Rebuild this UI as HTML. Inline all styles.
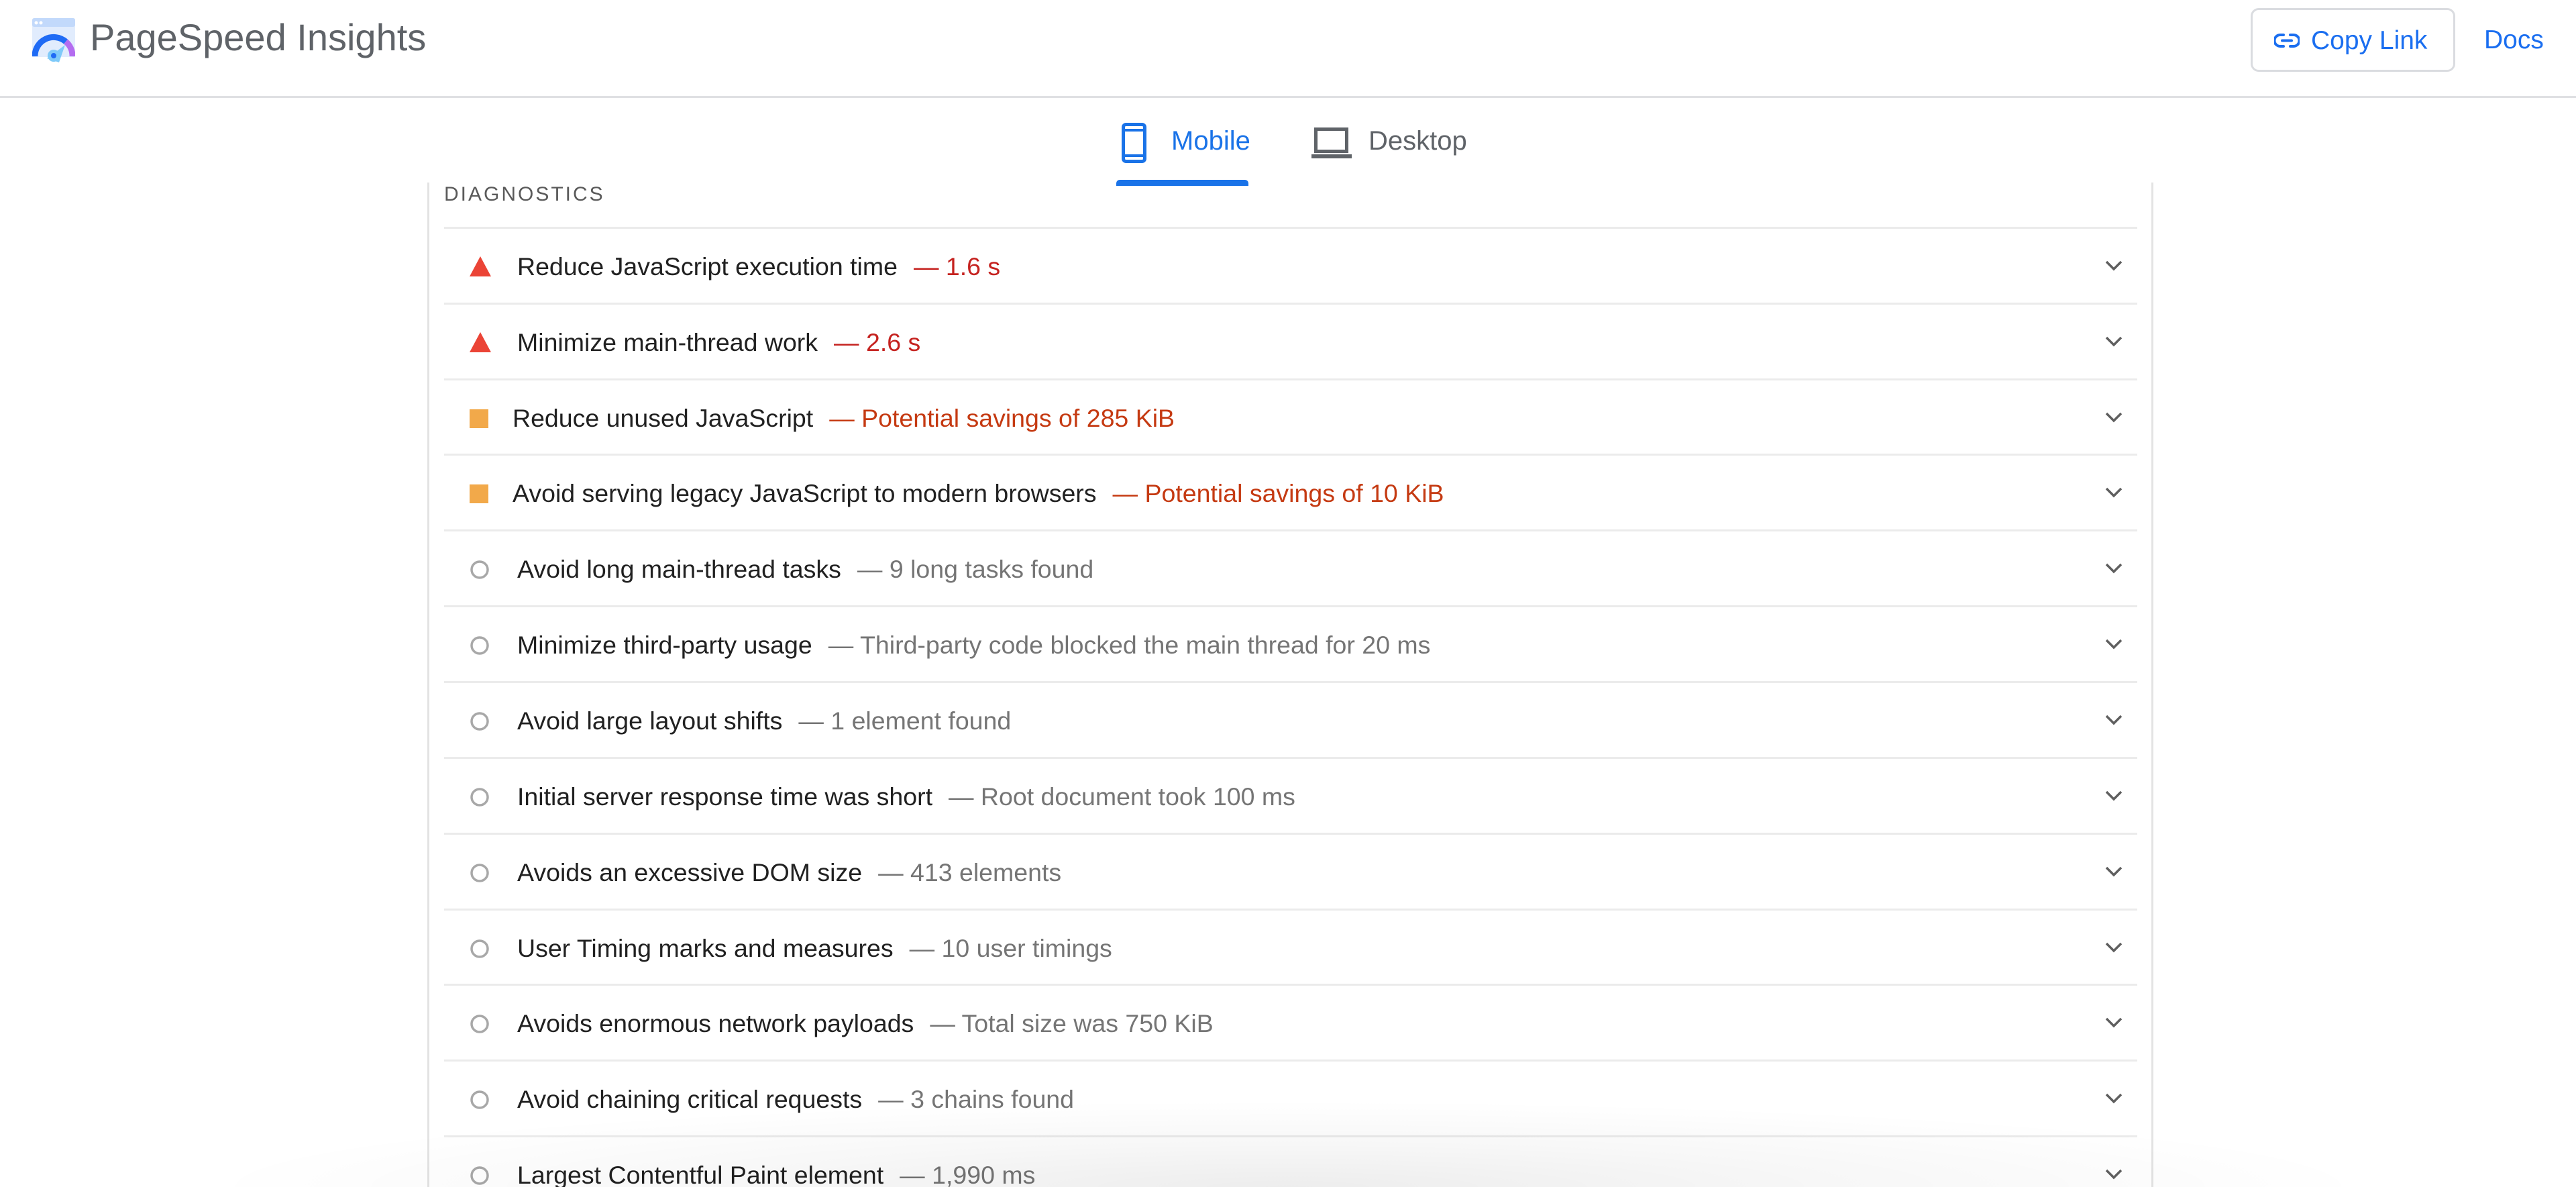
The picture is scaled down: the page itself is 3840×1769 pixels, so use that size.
<!DOCTYPE html>
<html><head><meta charset="utf-8">
<style>
*{margin:0;padding:0;box-sizing:border-box}
html,body{width:3840px;height:1769px;overflow:hidden;background:#fff;font-family:"Liberation Sans",Arial,sans-serif;position:relative}
.hdr{position:absolute;left:0;top:0;width:3840px;height:146px;border-bottom:3px solid #dfe0e3}
.title{position:absolute;left:134px;top:22px;font-size:56px;color:#5f6368;line-height:68px}
.btn{position:absolute;left:3355px;top:12px;width:305px;height:95px;border:3px solid #dadce0;border-radius:12px}
.btn span{position:absolute;left:87px;top:24px;font-size:39px;color:#1a6ef0;line-height:44px}
.docs{position:absolute;left:3703px;top:38px;font-size:39px;color:#1a6ef0;line-height:44px}
.tab{position:absolute;font-size:40px;line-height:48px;top:186px}
.uline{position:absolute;left:1664px;top:268px;width:197px;height:9px;background:#1a73e8;border-radius:5px 5px 0 0}
.panel{position:absolute;left:637px;top:272px;width:2573px;height:1497px;border-left:3px solid #e3e3e3;border-right:3px solid #e3e3e3}
.diag{position:absolute;left:662px;top:272px;font-size:30px;letter-spacing:3px;color:#5a5a5a;line-height:36px}
.row{position:absolute;left:662px;width:2524px;height:113px;border-top:3px solid #ebebeb;overflow:hidden}
.row .t{position:absolute;left:109px;top:34px;font-size:37.5px;line-height:44px;color:#212121;white-space:nowrap}
.row .d{margin-left:24px}
.red{color:#c5221f}.org{color:#c53a12}.gry{color:#757575}
.ic{position:absolute;left:37px;top:40px}
.chev{position:absolute;left:2475px;top:46px}
.shadow{position:absolute;left:300px;top:1640px;width:3240px;height:129px;background:radial-gradient(ellipse 50% 100% at 50% 100%,rgba(0,0,0,0.07) 0%,rgba(0,0,0,0.03) 50%,rgba(0,0,0,0) 100%);pointer-events:none}
</style></head><body>
<div class="hdr">
<svg style="position:absolute;left:48px;top:27px" width="64" height="66" viewBox="0 0 64 66">
<rect x="0" y="0" width="64" height="58" rx="3" fill="#e1ecfd"/>
<rect x="0" y="0" width="64" height="13" rx="3" fill="#c2d9fb"/>
<circle cx="6" cy="7" r="2.5" fill="#fff"/><circle cx="13" cy="7" r="2.5" fill="#fff"/>
<path d="M4 57 A28 28 0 0 1 50 35" fill="none" stroke="#1f6bf5" stroke-width="9"/>
<path d="M50 35 A28 28 0 0 1 60 57" fill="none" stroke="#b46cf0" stroke-width="9"/>
<path d="M49 40 L40 66 L22 60 Z" fill="#7fcaf9"/>
<circle cx="32" cy="56" r="9" fill="#7fcaf9"/>
<circle cx="32" cy="56" r="4" fill="#1f6bf5"/>
</svg>
<div class="title">PageSpeed Insights</div>
<div class="btn">
<svg style="position:absolute;left:32px;top:34px" width="38" height="24" viewBox="0 0 38 24"><path d="M14 3H9a8.5 8.5 0 0 0 0 17h5M24 3h5a8.5 8.5 0 0 1 0 17h-5M12 11.5h14" fill="none" stroke="#1a6ef0" stroke-width="4" stroke-linecap="round"/></svg>
<span>Copy Link</span></div>
<div class="docs">Docs</div>
</div>
<svg style="position:absolute;left:1672px;top:183px" width="37" height="60" viewBox="0 0 37 60"><rect x="2.5" y="2.5" width="32" height="55" rx="4" fill="none" stroke="#1a73e8" stroke-width="5"/><path d="M3 11h31M3 49h31" stroke="#1a73e8" stroke-width="4"/></svg>
<div class="tab" style="left:1746px;color:#1a73e8">Mobile</div>
<div class="uline"></div>
<svg style="position:absolute;left:1955px;top:190px" width="60" height="47" viewBox="0 0 60 47"><rect x="6.5" y="2.5" width="46" height="33" fill="none" stroke="#5f6368" stroke-width="5"/><rect x="0" y="40" width="60" height="6" fill="#5f6368"/></svg>
<div class="tab" style="left:2040px;color:#5f6368">Desktop</div>
<div class="panel"></div>
<div class="diag">DIAGNOSTICS</div>

<div class="row" style="top:338px"><svg class="ic" width="34" height="32"><path d="M17 1L33 31H1Z" fill="#eb4436"/></svg><div class="t">Reduce JavaScript execution time<span class="d red">— 1.6 s</span></div><svg class="chev" width="28" height="18"><path d="M3 3l11 11 11-11" fill="none" stroke="#5f5f5f" stroke-width="3.5"/></svg></div>
<div class="row" style="top:451px"><svg class="ic" width="34" height="32"><path d="M17 1L33 31H1Z" fill="#eb4436"/></svg><div class="t">Minimize main-thread work<span class="d red">— 2.6 s</span></div><svg class="chev" width="28" height="18"><path d="M3 3l11 11 11-11" fill="none" stroke="#5f5f5f" stroke-width="3.5"/></svg></div>
<div class="row" style="top:564px"><svg class="ic" width="30" height="32"><rect x="1" y="3" width="28" height="28" fill="#f2a94a"/></svg><div class="t" style="left:102px">Reduce unused JavaScript<span class="d org">— Potential savings of 285 KiB</span></div><svg class="chev" width="28" height="18"><path d="M3 3l11 11 11-11" fill="none" stroke="#5f5f5f" stroke-width="3.5"/></svg></div>
<div class="row" style="top:676px"><svg class="ic" width="30" height="32"><rect x="1" y="3" width="28" height="28" fill="#f2a94a"/></svg><div class="t" style="left:102px">Avoid serving legacy JavaScript to modern browsers<span class="d org">— Potential savings of 10 KiB</span></div><svg class="chev" width="28" height="18"><path d="M3 3l11 11 11-11" fill="none" stroke="#5f5f5f" stroke-width="3.5"/></svg></div>
<div class="row" style="top:789px"><svg class="ic" width="34" height="34"><circle cx="16" cy="17" r="12" fill="none" stroke="#a8a8a8" stroke-width="3.5"/></svg><div class="t">Avoid long main-thread tasks<span class="d gry">— 9 long tasks found</span></div><svg class="chev" width="28" height="18"><path d="M3 3l11 11 11-11" fill="none" stroke="#5f5f5f" stroke-width="3.5"/></svg></div>
<div class="row" style="top:902px"><svg class="ic" width="34" height="34"><circle cx="16" cy="17" r="12" fill="none" stroke="#a8a8a8" stroke-width="3.5"/></svg><div class="t">Minimize third-party usage<span class="d gry">— Third-party code blocked the main thread for 20 ms</span></div><svg class="chev" width="28" height="18"><path d="M3 3l11 11 11-11" fill="none" stroke="#5f5f5f" stroke-width="3.5"/></svg></div>
<div class="row" style="top:1015px"><svg class="ic" width="34" height="34"><circle cx="16" cy="17" r="12" fill="none" stroke="#a8a8a8" stroke-width="3.5"/></svg><div class="t">Avoid large layout shifts<span class="d gry">— 1 element found</span></div><svg class="chev" width="28" height="18"><path d="M3 3l11 11 11-11" fill="none" stroke="#5f5f5f" stroke-width="3.5"/></svg></div>
<div class="row" style="top:1128px"><svg class="ic" width="34" height="34"><circle cx="16" cy="17" r="12" fill="none" stroke="#a8a8a8" stroke-width="3.5"/></svg><div class="t">Initial server response time was short<span class="d gry">— Root document took 100 ms</span></div><svg class="chev" width="28" height="18"><path d="M3 3l11 11 11-11" fill="none" stroke="#5f5f5f" stroke-width="3.5"/></svg></div>
<div class="row" style="top:1241px"><svg class="ic" width="34" height="34"><circle cx="16" cy="17" r="12" fill="none" stroke="#a8a8a8" stroke-width="3.5"/></svg><div class="t">Avoids an excessive DOM size<span class="d gry">— 413 elements</span></div><svg class="chev" width="28" height="18"><path d="M3 3l11 11 11-11" fill="none" stroke="#5f5f5f" stroke-width="3.5"/></svg></div>
<div class="row" style="top:1354px"><svg class="ic" width="34" height="34"><circle cx="16" cy="17" r="12" fill="none" stroke="#a8a8a8" stroke-width="3.5"/></svg><div class="t">User Timing marks and measures<span class="d gry">— 10 user timings</span></div><svg class="chev" width="28" height="18"><path d="M3 3l11 11 11-11" fill="none" stroke="#5f5f5f" stroke-width="3.5"/></svg></div>
<div class="row" style="top:1466px"><svg class="ic" width="34" height="34"><circle cx="16" cy="17" r="12" fill="none" stroke="#a8a8a8" stroke-width="3.5"/></svg><div class="t">Avoids enormous network payloads<span class="d gry">— Total size was 750 KiB</span></div><svg class="chev" width="28" height="18"><path d="M3 3l11 11 11-11" fill="none" stroke="#5f5f5f" stroke-width="3.5"/></svg></div>
<div class="row" style="top:1579px"><svg class="ic" width="34" height="34"><circle cx="16" cy="17" r="12" fill="none" stroke="#a8a8a8" stroke-width="3.5"/></svg><div class="t">Avoid chaining critical requests<span class="d gry">— 3 chains found</span></div><svg class="chev" width="28" height="18"><path d="M3 3l11 11 11-11" fill="none" stroke="#5f5f5f" stroke-width="3.5"/></svg></div>
<div class="row" style="top:1692px;height:77px"><svg class="ic" width="34" height="34"><circle cx="16" cy="17" r="12" fill="none" stroke="#a8a8a8" stroke-width="3.5"/></svg><div class="t">Largest Contentful Paint element<span class="d gry">— 1,990 ms</span></div><svg class="chev" width="28" height="18"><path d="M3 3l11 11 11-11" fill="none" stroke="#5f5f5f" stroke-width="3.5"/></svg></div>
<div class="shadow"></div>
</body></html>
